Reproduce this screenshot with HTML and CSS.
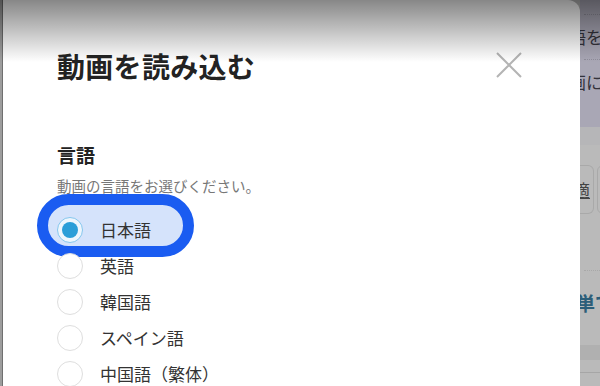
FILE: index.html
```html
<!DOCTYPE html>
<html lang="ja">
<head>
<meta charset="utf-8">
<title>動画を読み込む</title>
<link rel="stylesheet" href="styles.css">
</head>
<body>
<div class="screen">
  <div class="edge"></div>
  <section class="modal">
    <header class="modal-head">
      <h2 class="modal-title">動画を読み込む</h2>
      <button class="close" aria-label="閉じる">
        <svg width="26" height="26" viewBox="0 0 26 26"><path d="M1 1 L25 25 M25 1 L1 25" stroke="#b4b4b4" stroke-width="2" fill="none"/></svg>
      </button>
    </header>
    <div class="field">
      <h3 class="field-label">言語</h3>
      <p class="field-help">動画の言語をお選びください。</p>
      <ul class="options">
        <li class="option is-selected is-highlighted"><span class="radio"></span><span class="option-label">日本語</span></li>
        <li class="option"><span class="radio"></span><span class="option-label">英語</span></li>
        <li class="option"><span class="radio"></span><span class="option-label">韓国語</span></li>
        <li class="option"><span class="radio"></span><span class="option-label">スペイン語</span></li>
        <li class="option"><span class="radio"></span><span class="option-label">中国語（繁体）</span></li>
      </ul>
    </div>
  </section>
  <aside class="behind">
    <div class="bg-top">
      <div class="bg-dots"></div>
      <p class="bg-line">語を</p>
      <div class="bg-dots"></div>
      <p class="bg-line">画に</p>
    </div>
    <div class="bg-band"></div>
    <div class="bg-main">
      <div class="bg-cards">
        <div class="bg-card"><u>適</u></div>
        <div class="bg-card"></div>
      </div>
      <div class="bg-dots light"></div>
      <p class="bg-link">単で</p>
      <div class="bg-band2"></div>
      <div class="bg-rule"></div>
    </div>
  </aside>
  <div class="top-fade"></div>
</div>
</body>
</html>
```
FILE: styles.css
```css
*, *::before, *::after { box-sizing: border-box; }
html, body { margin: 0; padding: 0; }
body {
  width: 600px;
  height: 386px;
  overflow: hidden;
  font-family: "Noto Sans CJK JP", "Noto Sans", sans-serif;
  background: #b9b9b9;
}
.screen {
  position: relative;
  display: flex;
  width: 600px;
  height: 386px;
  overflow: hidden;
}
.edge {
  width: 3px;
  flex: none;
  background: #9d9d9d;
  border-right: 1px solid #707070;
}
.modal {
  width: 577px;
  flex: none;
  height: 386px;
  background: #fff;
  border-top-right-radius: 12px;
  padding: 46px 58px 0 54px;
}
.modal-head {
  display: flex;
  align-items: center;
  justify-content: space-between;
  height: 40px;
}
.modal-title {
  margin: 0;
  font-size: 28px;
  line-height: 40px;
  font-weight: 700;
  color: #232323;
  letter-spacing: 0.3px;
}
.close {
  width: 26px;
  height: 26px;
  padding: 0;
  border: 0;
  background: none;
  display: block;
  margin-top: -2px;
}
.close svg { display: block; }
.field { margin-top: 56px; }
.field-label {
  margin: 0;
  font-size: 19px;
  line-height: 26px;
  font-weight: 700;
  color: #222;
}
.field-help {
  margin: 8px 0 0;
  font-size: 14.5px;
  line-height: 20px;
  color: #777;
}
.options {
  list-style: none;
  margin: 16px 0 0;
  padding: 0;
}
.option {
  position: relative;
  isolation: isolate;
  display: flex;
  align-items: center;
  height: 36px;
}
.radio {
  width: 26px;
  height: 26px;
  flex: none;
  border-radius: 50%;
  border: 1px solid #dedede;
  background: #fff;
  display: flex;
  align-items: center;
  justify-content: center;
}
.option.is-selected .radio {
  border: 1.5px solid #86c7ee;
  background: #eef6fd;
}
.option.is-selected .radio::after {
  content: "";
  width: 16px;
  height: 16px;
  border-radius: 50%;
  background: #2b9ed8;
}
.option-label {
  margin-left: 17px;
  font-size: 17px;
  line-height: 24px;
  color: #333;
}
.option.is-highlighted::before {
  content: "";
  position: absolute;
  z-index: -1;
  left: -20px;
  top: -18px;
  width: 157px;
  height: 63px;
  border: 11px solid #1a5cf1;
  border-radius: 32px;
  background: #d5e3fb;
}
.behind {
  width: 20px;
  flex: none;
  overflow: hidden;
  display: flex;
  flex-direction: column;
}
.bg-top {
  height: 127px;
  background: #a9a7b5;
  padding-top: 14px;
}
.bg-dots {
  height: 0;
  border-top: 1px dotted #8f8d9a;
  margin-left: 4px;
}
.bg-dots.light { border-top-color: #a8a8a8; margin-top: 56px; }
.bg-line {
  margin: 0 0 0 -11px;
  white-space: nowrap;
  font-size: 17px;
  line-height: 44px;
  color: #34333c;
}
.bg-band {
  height: 18px;
  background: #b6b6b8;
}
.bg-main {
  flex: 1;
  background: #bababa;
  padding-top: 20px;
}
.bg-cards {
  display: flex;
  gap: 3px;
}
.bg-card {
  flex: none;
  width: 14px;
  height: 49px;
  border: 1px solid #a9a9a9;
  border-left: 0;
  border-radius: 0 6px 6px 0;
  font-size: 17px;
  line-height: 48px;
  color: #444;
  overflow: hidden;
  white-space: nowrap;
  text-indent: -7px;
}
.bg-card + .bg-card {
  width: 30px;
  border-left: 1px solid #a9a9a9;
  border-radius: 6px;
}
.bg-link {
  margin: 20px 0 0 -4px;
  white-space: nowrap;
  font-size: 19px;
  line-height: 24px;
  font-weight: 700;
  color: #2c5e79;
}
.bg-band2 {
  height: 15px;
  margin-top: 30px;
  background: #b0b0b0;
}
.bg-rule {
  height: 0;
  margin-top: 12px;
  border-top: 1px solid #a6a6a6;
}
.top-fade {
  position: absolute;
  left: 0;
  top: 0;
  right: 0;
  height: 62px;
  pointer-events: none;
  background: linear-gradient(to bottom, rgba(0,0,0,0.47), rgba(0,0,0,0));
}
```
